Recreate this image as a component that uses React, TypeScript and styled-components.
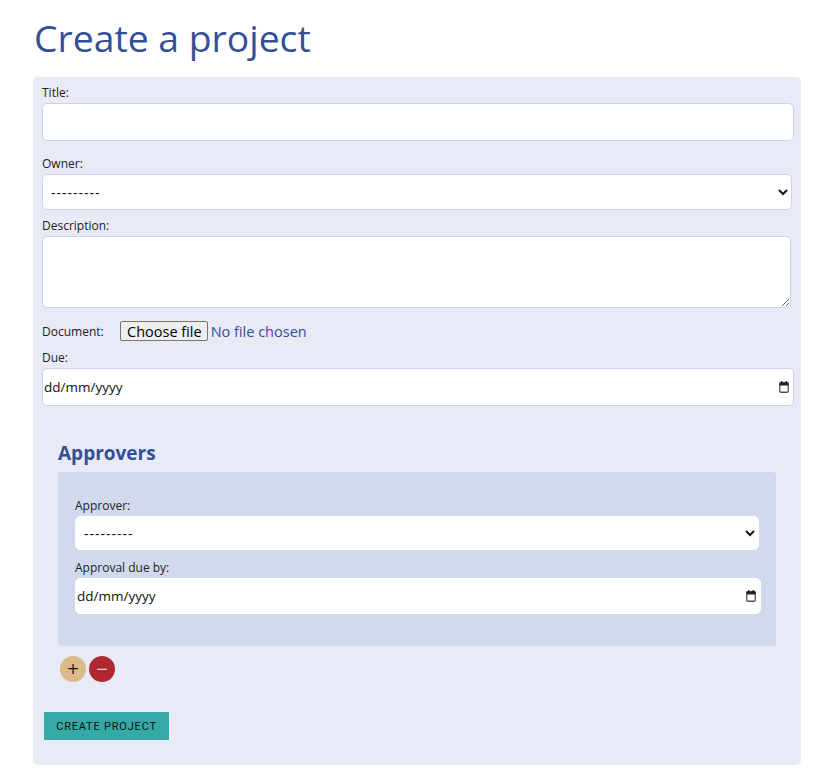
import React from "react";
import styled, { createGlobalStyle } from "styled-components";

const Global = createGlobalStyle`
  html, body { margin: 0; padding: 0; background: #ffffff; }
  body { font-family: "Open Sans", "Liberation Sans", sans-serif; color: #222; }
`;

const Page = styled.div`
  padding: 0 18px 0 33px;
`;

const Heading = styled.h1`
  margin: 0;
  padding: 14px 0 0 1px;
  height: 77px;
  box-sizing: border-box;
  font-family: "Open Sans", "Liberation Sans", sans-serif;
  font-weight: 400;
  font-size: 37.3px;
  line-height: 48px;
  color: #334f96;
`;

const Panel = styled.form`
  width: 768px;
  box-sizing: border-box;
  background: #e8eaf6;
  border-radius: 5px;
  padding: 8px 8px 25px 9px;
  display: flex;
  flex-direction: column;
`;

const Field = styled.div<{ $mb?: number }>`
  display: flex;
  flex-direction: column;
  gap: 2px;
  margin-bottom: ${(p) => p.$mb ?? 0}px;
`;

const Label = styled.label`
  font-size: 12px;
  line-height: 16px;
  color: #222;
`;

const TextInput = styled.input<{ $w: string; $h: number }>`
  width: ${(p) => p.$w};
  height: ${(p) => p.$h}px;
  box-sizing: border-box;
  border: 1px solid #cbd2ec;
  border-radius: 5px;
  background: #ffffff;
  font-family: "Open Sans", "Liberation Sans", sans-serif;
  font-size: 13px;
  color: #111;
  padding: 0 1px;
  margin: 0;
`;

const DateWrap = styled.div<{ $w: string }>`
  position: relative;
  width: ${(p) => p.$w};
`;

const DateInput = styled.input<{ $h: number; $plain?: boolean }>`
  width: 100%;
  height: ${(p) => p.$h}px;
  box-sizing: border-box;
  border: 1px solid ${(p) => (p.$plain ? "#ffffff" : "#cbd2ec")};
  border-radius: 5px;
  background: #ffffff;
  font-family: "Open Sans", "Liberation Sans", sans-serif;
  font-size: 13.5px;
  color: #111;
  padding: 0 0 0 1px;
  margin: 0;
  &::placeholder {
    color: #111;
    opacity: 1;
  }
`;

const CalIcon = styled.svg`
  position: absolute;
  right: 5px;
  top: 50%;
  transform: translateY(-50%);
  width: 10px;
  height: 12px;
  pointer-events: none;
`;

const Calendar = () => (
  <CalIcon viewBox="0 0 10 12">
    <rect x="0.75" y="1.75" width="8.5" height="9.5" rx="1" fill="none" stroke="#555" strokeWidth="1.3" />
    <rect x="0.5" y="1.5" width="9" height="3" fill="#222" />
    <rect x="2" y="0" width="1.4" height="2" fill="#222" />
    <rect x="6.6" y="0" width="1.4" height="2" fill="#222" />
  </CalIcon>
);

const Select = styled.select<{ $w: string; $h: number; $bordered?: boolean }>`
  width: ${(p) => p.$w};
  height: ${(p) => p.$h}px;
  box-sizing: border-box;
  border: 1px solid ${(p) => (p.$bordered ? "#cbd2ec" : "#ffffff")};
  border-radius: 5px;
  background: #ffffff;
  font-family: "Open Sans", "Liberation Sans", sans-serif;
  font-size: 14px;
  letter-spacing: 1px;
  color: #111;
  padding: 0 4px;
  margin: 0;
`;

const TextArea = styled.textarea`
  width: 749px;
  height: 72px;
  box-sizing: border-box;
  border: 1px solid #cbd2ec;
  border-radius: 5px;
  background: #ffffff;
  margin: 0;
  font-family: "Open Sans", "Liberation Sans", sans-serif;
  font-size: 13px;
`;

const DocRow = styled.div`
  display: flex;
  align-items: center;
  height: 20px;
  margin: 13px 0 9px;
`;

const DocLabel = styled.span`
  font-size: 12px;
  width: 78px;
  color: #222;
`;

const HiddenFile = styled.input`
  display: none;
`;

const FileButton = styled.label`
  box-sizing: border-box;
  height: 20px;
  display: inline-flex;
  align-items: center;
  padding: 0 5px 0 6px;
  background: #efefef;
  border: 1px solid #767676;
  border-radius: 2px;
  font-size: 14.5px;
  color: #000;
  margin-right: 3px;
`;

const FileStatus = styled.span`
  font-size: 14.5px;
  color: #334f96;
`;

const Approvers = styled.section`
  margin: 34px 17px 0 16px;
  display: flex;
  flex-direction: column;
`;

const SubHeading = styled.h2`
  margin: 0 0 6px;
  font-size: 19px;
  line-height: 26px;
  font-weight: 700;
  color: #334f96;
`;

const FormSet = styled.div`
  background: #d3d9ec;
  border-radius: 3px;
  padding: 26px 16px 32px 17px;
  display: flex;
  flex-direction: column;
`;

const RoundRow = styled.div`
  display: flex;
  gap: 3px;
  margin: 10px 0 0 2px;
`;

const RoundButton = styled.button<{ $bg: string; $fg: string }>`
  width: 26px;
  height: 26px;
  border-radius: 50%;
  border: none;
  padding: 0;
  background: ${(p) => p.$bg};
  color: ${(p) => p.$fg};
  font-family: "DejaVu Sans", sans-serif;
  font-size: 15px;
  line-height: 26px;
  display: flex;
  align-items: center;
  justify-content: center;
`;

const SubmitButton = styled.button`
  align-self: flex-start;
  margin: 30px 0 0 2px;
  width: 125px;
  height: 28px;
  border: none;
  border-radius: 1px;
  background: #35a9a6;
  color: #111;
  font-family: Roboto, "Liberation Sans", sans-serif;
  font-size: 11px;
  letter-spacing: 0.8px;
  text-transform: uppercase;
  padding: 0;
`;

export default function App() {
  return (
    <>
      <Global />
      <Page>
        <Heading>Create a project</Heading>
        <Panel onSubmit={(e) => e.preventDefault()}>
          <Field $mb={15}>
            <Label htmlFor="title">Title:</Label>
            <TextInput id="title" type="text" $w="752px" $h={38} />
          </Field>
          <Field $mb={8}>
            <Label htmlFor="owner">Owner:</Label>
            <Select id="owner" $w="750px" $h={36} $bordered>
              <option>---------</option>
            </Select>
          </Field>
          <Field>
            <Label htmlFor="desc">Description:</Label>
            <TextArea id="desc" />
          </Field>
          <DocRow>
            <DocLabel>Document:</DocLabel>
            <FileButton htmlFor="doc">Choose file</FileButton>
            <HiddenFile id="doc" type="file" />
            <FileStatus>No file chosen</FileStatus>
          </DocRow>
          <Field>
            <Label htmlFor="due">Due:</Label>
            <DateWrap $w="752px">
              <DateInput id="due" type="text" placeholder="dd/mm/yyyy" $h={38} />
              <Calendar />
            </DateWrap>
          </Field>
          <Approvers>
            <SubHeading>Approvers</SubHeading>
            <FormSet>
              <Field $mb={10}>
                <Label htmlFor="approver">Approver:</Label>
                <Select id="approver" $w="684px" $h={34}>
                  <option>---------</option>
                </Select>
              </Field>
              <Field>
                <Label htmlFor="appdue">Approval due by:</Label>
                <DateWrap $w="686px">
                  <DateInput id="appdue" type="text" placeholder="dd/mm/yyyy" $h={36} $plain />
                  <Calendar />
                </DateWrap>
              </Field>
            </FormSet>
            <RoundRow>
              <RoundButton type="button" $bg="#dbb98a" $fg="#111">+</RoundButton>
              <RoundButton type="button" $bg="#b0282f" $fg="#f3d0d0">−</RoundButton>
            </RoundRow>
          </Approvers>
          <SubmitButton type="submit">Create project</SubmitButton>
        </Panel>
      </Page>
    </>
  );
}
